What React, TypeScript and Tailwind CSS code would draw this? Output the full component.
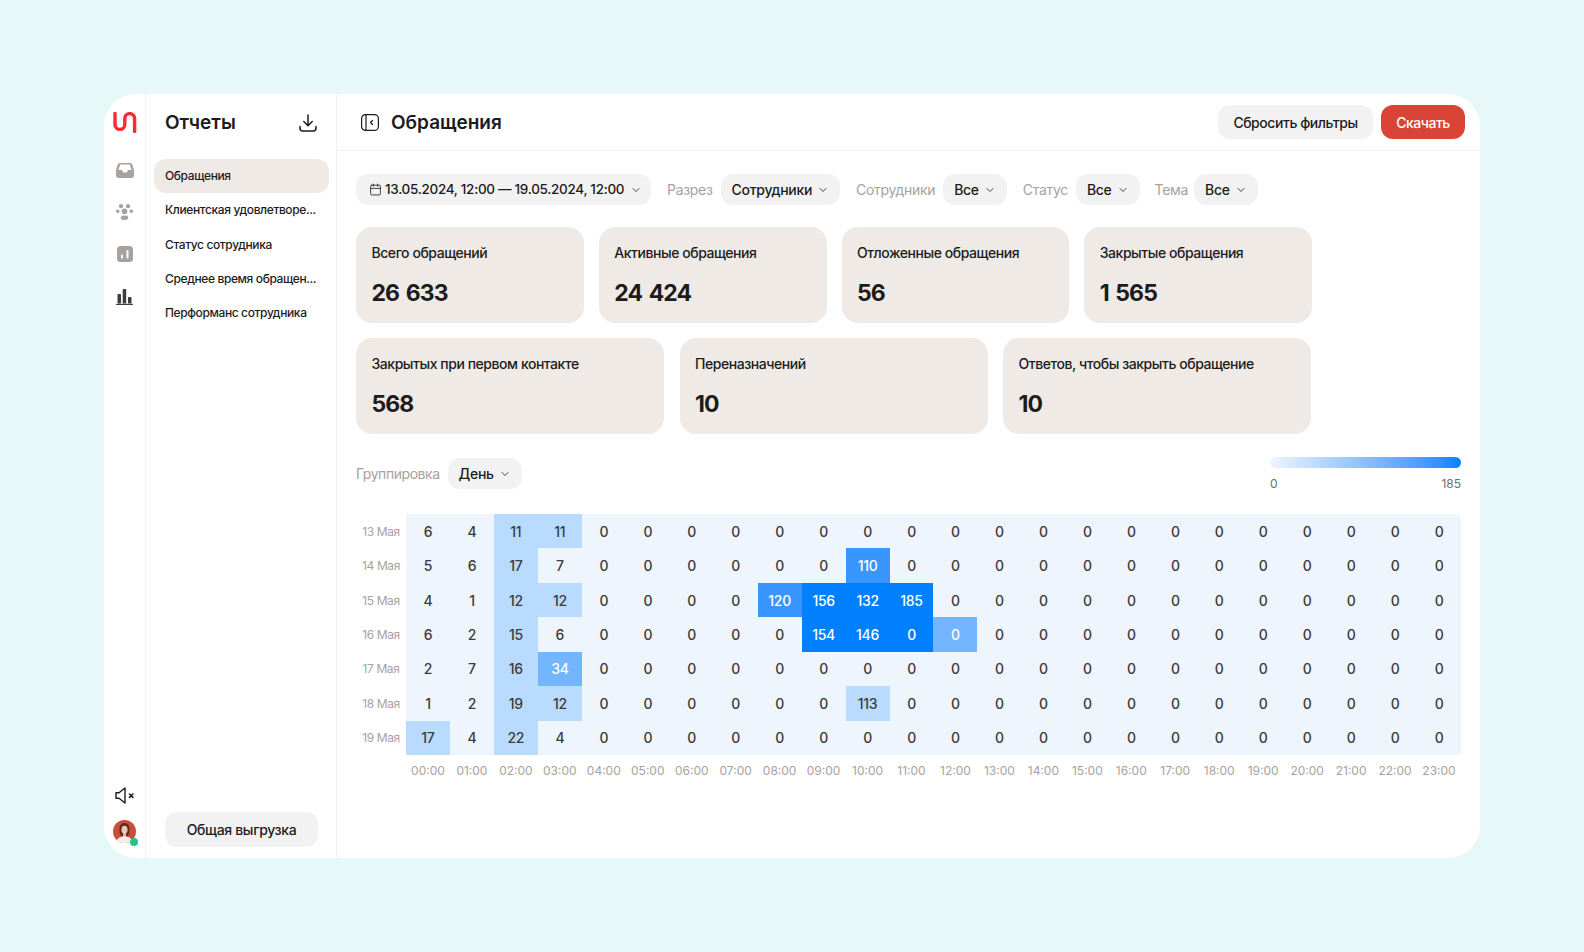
import { Calendar, ChevronDown } from "lucide-react";

const font = { fontFamily: '"Inter", "Liberation Sans", sans-serif' };

const reports = [
  "Обращения",
  "Клиентская удовлетворе...",
  "Статус сотрудника",
  "Среднее время обращен...",
  "Перформанс сотрудника",
];

const topCards = [
  { label: "Всего обращений", value: "26 633" },
  { label: "Активные обращения", value: "24 424" },
  { label: "Отложенные обращения", value: "56" },
  { label: "Закрытые обращения", value: "1 565" },
];

const bottomCards = [
  { label: "Закрытых при первом контакте", value: "568" },
  { label: "Переназначений", value: "10" },
  { label: "Ответов, чтобы закрыть обращение", value: "10" },
];

const days = ["13 Мая", "14 Мая", "15 Мая", "16 Мая", "17 Мая", "18 Мая", "19 Мая"];
const hours = Array.from({ length: 24 }, (_, i) => `${String(i).padStart(2, "0")}:00`);

const values = [
  [6, 4, 11, 11],
  [5, 6, 17, 7, 0, 0, 0, 0, 0, 0, 110],
  [4, 1, 12, 12, 0, 0, 0, 0, 120, 156, 132, 185],
  [6, 2, 15, 6, 0, 0, 0, 0, 0, 154, 146, 0, 0],
  [2, 7, 16, 34],
  [1, 2, 19, 12, 0, 0, 0, 0, 0, 0, 113],
  [17, 4, 22, 4],
];

// . base, l light, m mid, s strong, d deep
const shades = [
  "..ll....................",
  "..l.......s.............",
  "..ll....sddd............",
  "..l......dddm...........",
  "..lm....................",
  "..ll......l.............",
  "l.l.....................",
];

const shadeClass: Record<string, string> = {
  ".": "bg-[#eff5fd] text-[#3b3b3b]",
  l: "bg-[#b8dbff] text-[#3b3b3b]",
  m: "bg-[#73b5ff] text-white",
  s: "bg-[#3a96ff] text-white",
  d: "bg-[#0080ff] text-white",
};

const Logo = () => (
  <svg width="24" height="21" viewBox="0 0 24 21" fill="none">
    <path
      d="M2 1.500v11a4.800 4.800 0 0 0 9.800 0V6.500a4.800 4.800 0 0 1 9.800 0V19.500"
      stroke="#fb2a30"
      strokeWidth="3.400"
      strokeLinecap="round"
    />
  </svg>
);

const InboxIcon = () => (
  <svg width="18" height="15" viewBox="0 0 18 15">
    <path
      d="M4 0h10a2.500 2.500 0 0 1 2.300 1.600L18 7v5a3 3 0 0 1-3 3H3a3 3 0 0 1-3-3V7l1.700-5.400A2.500 2.500 0 0 1 4 0z"
      fill="#a8a29e"
    />
    <path d="M4.300 1.500h9.400L15.600 7h-3.800a2.800 2.800 0 0 1-5.600 0H2.400z" fill="#fff" />
  </svg>
);

const TeamIcon = () => (
  <svg width="17" height="16" viewBox="0 0 17 16" fill="#a8a29e">
    <circle cx="5" cy="2.200" r="2.100" />
    <circle cx="12" cy="2.200" r="2.100" />
    <circle cx="1.700" cy="7.200" r="1.700" />
    <circle cx="15.300" cy="7.200" r="1.700" />
    <circle cx="8.500" cy="7.200" r="2.800" />
    <ellipse cx="8.500" cy="13.800" rx="3.800" ry="2.200" />
  </svg>
);

const ReportIcon = () => (
  <svg width="16" height="16" viewBox="0 0 16 16">
    <rect width="16" height="16" rx="3.500" fill="#a8a29e" />
    <rect x="4" y="8.500" width="2" height="4" rx="1" fill="#fff" />
    <rect x="9.500" y="4" width="2" height="8.500" rx="1" fill="#fff" />
  </svg>
);

const BarsIcon = () => (
  <svg width="17" height="16" viewBox="0 0 17 16" fill="#3d3d3d">
    <rect x="1.500" y="5" width="3.500" height="9.500" rx="0.800" />
    <rect x="6.700" y="0" width="3.500" height="14.500" rx="0.800" />
    <rect x="12" y="8" width="3.500" height="6.500" rx="0.800" />
    <rect x="0" y="14.800" width="17" height="1.200" rx="0.600" />
  </svg>
);

const MuteIcon = () => (
  <svg width="19" height="17" viewBox="0 0 19 17" fill="none" stroke="#1c1c1c" strokeWidth="1.400" strokeLinejoin="round">
    <path d="M1 5.800v5.400h3l6 4.800V1L4 5.800z" />
    <path d="M14.500 7l3.400 3.400M17.900 7l-3.400 3.400" strokeLinecap="round" strokeWidth="1.600" />
  </svg>
);

const Avatar = () => (
  <div className="relative h-[23px] w-[23px]">
    <svg width="23" height="23" viewBox="0 0 23 23" className="rounded-full">
      <rect width="23" height="23" fill="#c94f39" />
      <path d="M6.500 11c-.5-5 1.500-8 5-8s5.500 3 5 8c0 2-1 4-2 5h-6c-1-1-2-3-2-5z" fill="#5a2b22" />
      <ellipse cx="11.500" cy="9.800" rx="3.100" ry="4" fill="#efc7b2" />
      <rect x="10" y="13" width="3" height="4" fill="#e5b69f" />
      <path d="M3 23c.5-4.500 4-6.500 8.500-6.500S19.500 18.500 20 23z" fill="#f4efe9" />
    </svg>
    <span className="absolute right-[-2px] bottom-[-3px] h-2 w-2 rounded-full bg-[#22c38e]" />
  </div>
);

const DownloadIcon = () => (
  <svg width="18" height="18" viewBox="0 0 18 18" fill="none" stroke="#1c1c1c" strokeWidth="1.500" strokeLinecap="round" strokeLinejoin="round">
    <path d="M9 1v10.500M4.800 7.500L9 11.700l4.200-4.200" />
    <path d="M1 12.500v1.800A2.700 2.700 0 0 0 3.700 17h10.600a2.700 2.700 0 0 0 2.700-2.700v-1.800" />
  </svg>
);

const PanelIcon = () => (
  <svg width="18" height="17" viewBox="0 0 18 17" fill="none" stroke="#1c1c1c" strokeWidth="1.200" strokeLinecap="round" strokeLinejoin="round">
    <rect x="0.600" y="0.600" width="16.800" height="15.800" rx="4" />
    <path d="M5 1v15M11.500 6.500L9.500 8.500l2 2" />
  </svg>
);

const Pill = ({ text }: { text: string }) => (
  <div className="flex h-[31px] items-center gap-[5px] rounded-xl bg-[#f2f2f2] px-[11px] text-sm font-medium tracking-[-0.3px] text-[#1c1c1c]">
    {text}
    <ChevronDown size={12} strokeWidth={2} className="text-[#444]" />
  </div>
);

const Stat = ({ label, value, width }: { label: string; value: string; width: string }) => (
  <div className={`flex h-24 flex-col rounded-2xl bg-[#efeae6] px-[15.500px] pt-[17px] ${width}`}>
    <div className="text-sm leading-[17px] font-medium tracking-[-0.45px] text-[#1c1c1c]">{label}</div>
    <div className="mt-4 text-[23px] leading-[32px] font-bold tracking-[-0.9px] [word-spacing:2px] text-[#1c1c1c]">
      {value}
    </div>
  </div>
);

const App = () => {
  return (
    <div style={font} className="flex h-screen w-full items-center justify-center bg-[#e6f8f8]">
      <div className="flex h-[764px] w-[1376px] overflow-hidden rounded-[32px] bg-white">
        <aside className="flex w-[42px] flex-col items-center border-r border-[#f1f1f1] pt-[18px] pb-[15px]">
          <Logo />
          <div className="mt-[30px] flex flex-col items-center gap-[26px]">
            <InboxIcon />
            <TeamIcon />
            <ReportIcon />
            <div className="mt-px">
              <BarsIcon />
            </div>
          </div>
          <div className="mt-auto flex flex-col items-center gap-4">
            <MuteIcon />
            <Avatar />
          </div>
        </aside>

        <nav className="flex w-[191px] flex-col border-r border-[#f1f1f1] pr-[7px] pb-[11px] pl-2">
          <div className="flex h-[57px] items-center justify-between pr-[12px] pl-[11px]">
            <h2 className="mt-[2px] text-[19px] font-semibold text-[#1c1c1c]">Отчеты</h2>
            <DownloadIcon />
          </div>
          <ul className="mt-2 flex flex-col gap-[0.300px]">
            {reports.map((item, i) => (
              <li
                key={item}
                className={`flex h-[34px] items-center rounded-xl pl-[11px] text-xs font-medium tracking-[-0.38px] whitespace-nowrap text-[#1c1c1c] ${i === 0 ? "bg-[#efeae6]" : ""}`}
              >
                {item}
              </li>
            ))}
          </ul>
          <button className="mt-auto ml-[11px] h-[35px] w-[153px] rounded-xl bg-[#f2f2f2] text-sm font-medium tracking-[-0.35px] text-[#1c1c1c]">
            Общая выгрузка
          </button>
        </nav>

        <main className="flex min-w-0 flex-1 flex-col">
          <header className="flex h-[57px] items-center justify-between border-b border-[#f1f1f1] pr-[15px] pl-6">
            <div className="flex items-center gap-3">
              <PanelIcon />
              <h1 className="mt-[2px] text-[19px] font-semibold text-[#1c1c1c]">Обращения</h1>
            </div>
            <div className="flex items-center gap-2">
              <button className="h-[34px] w-[155px] rounded-xl bg-[#f2f2f2] pt-px text-sm font-medium tracking-[-0.45px] text-[#1c1c1c]">
                Сбросить фильтры
              </button>
              <button className="h-[34px] w-[84px] rounded-xl bg-[#d94436] pt-px text-sm font-medium tracking-[-0.5px] text-white">
                Скачать
              </button>
            </div>
          </header>

          <div className="flex flex-col pt-[23px] pr-[19px] pl-[19px]">
            <div className="flex items-center text-sm tracking-[-0.3px] text-[#a8a29e]">
              <div className="flex h-[31px] w-[295px] items-center rounded-xl bg-[#f2f2f2] pl-[13px] text-[13.500px] font-medium whitespace-nowrap text-[#1c1c1c]">
                <Calendar size={13} strokeWidth={1.500} className="mr-[3px] shrink-0" />
                13.05.2024, 12:00 — 19.05.2024, 12:00
                <ChevronDown size={12} strokeWidth={2} className="ml-[6px] shrink-0 text-[#444]" />
              </div>
              <span className="mr-2 ml-4">Разрез</span>
              <Pill text="Сотрудники" />
              <span className="mr-2 ml-4">Сотрудники</span>
              <Pill text="Все" />
              <span className="mr-2 ml-4">Статус</span>
              <Pill text="Все" />
              <span className="mr-[6px] ml-[15px]">Тема</span>
              <Pill text="Все" />
            </div>

            <div className="mt-[22px] flex gap-[15px]">
              {topCards.map((c) => (
                <Stat key={c.label} {...c} width="w-[227.750px]" />
              ))}
            </div>
            <div className="mt-[15px] flex gap-[15.500px]">
              {bottomCards.map((c) => (
                <Stat key={c.label} {...c} width="w-[308px]" />
              ))}
            </div>

            <div className="mt-[23px] flex items-start justify-between">
              <div className="mt-px flex items-center gap-2 text-sm tracking-[-0.45px] text-[#a8a29e]">
                <span>Группировка</span>
                <Pill text="День" />
              </div>
              <div className="w-[191px]">
                <div className="h-[11px] rounded-full bg-gradient-to-r from-[#eff5fd] to-[#0080ff]" />
                <div className="mt-2 flex justify-between text-xs text-[#6f6f6f]">
                  <span>0</span>
                  <span>185</span>
                </div>
              </div>
            </div>

            <div className="mt-[22px] grid grid-cols-[50px_repeat(24,1fr)] grid-rows-[repeat(7,34.430px)]">
              {days.map((day, r) => (
                <div key={day} className="contents">
                  <div className="flex items-center justify-center pt-px text-xs tracking-[-0.4px] text-[#a8a29e]">{day}</div>
                  {hours.map((h, c) => (
                    <div
                      key={h}
                      className={`flex items-center justify-center pt-px text-sm font-medium tracking-[-0.3px] ${shadeClass[shades[r][c]]} ${r === 0 && c === 23 ? "rounded-tr-md" : ""}`}
                    >
                      {values[r][c] ?? 0}
                    </div>
                  ))}
                </div>
              ))}
            </div>
            <div className="mt-2 grid grid-cols-[50px_repeat(24,1fr)] text-xs text-[#a8a29e]">
              <span />
              {hours.map((h) => (
                <span key={h} className="text-center">
                  {h}
                </span>
              ))}
            </div>
          </div>
        </main>
      </div>
    </div>
  );
};

export default App;
